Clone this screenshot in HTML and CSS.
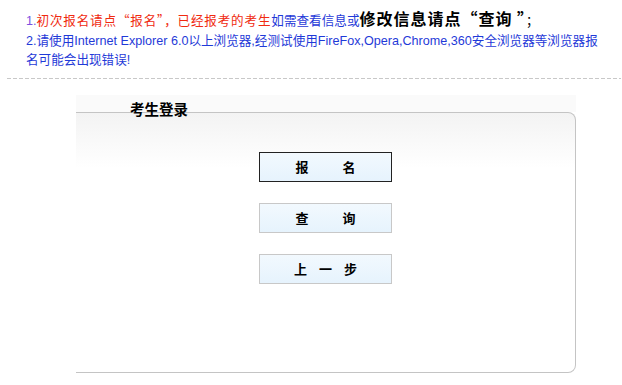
FILE: index.html
```html
<!DOCTYPE html>
<html lang="zh-CN">
<head>
  <meta charset="UTF-8">
  <title>考生登录</title>
  <link rel="stylesheet" href="styles.css">
</head>
<body>
  <div class="notice">
    <p class="line">
      <span class="num">1.</span><span class="red cjk">初次报名请点“报名”，已经报考的考生</span><span class="blue">如需查看信息或</span><strong class="big cjk">修改信息请点“查询 ”</strong><span class="semi">；</span>
    </p>
    <p class="line blue">
      2.请使用Internet Explorer 6.0以上浏览器,经测试使用FireFox,Opera,Chrome,360安全浏览器等浏览器报名可能会出现错误!
    </p>
  </div>

  <div class="dash"></div>

  <div class="panel">
    <div class="panel-head">
      <span class="panel-title">考生登录</span>
    </div>
    <div class="panel-box">
      <button class="btn btn-default btn-wide"><span>报</span><span>名</span></button>
      <button class="btn btn-wide"><span>查</span><span>询</span></button>
      <button class="btn btn-step"><span>上</span><span>一</span><span>步</span></button>
    </div>
  </div>
</body>
</html>
```

FILE: styles.css
```css
:root {
  --red: #f02a10;
  --blue: #1f3ad8;
  --line-gray: #c4c4c4;
}

body {
  margin: 0;
  font-family: 'Liberation Sans', 'Noto Sans CJK SC', sans-serif;
  font-size: 12.6px;
  color: #000;
  background: #fff;
}

.notice {
  padding: 9px 14px 0 26px;
}

.line {
  margin: 0;
  line-height: 19.5px;
}

.cjk {
  font-family: 'Noto Sans CJK SC', sans-serif;
}

.num {
  color: #7a50e0;
}

.red {
  color: var(--red);
  letter-spacing: 0.8px;
}

.blue {
  color: var(--blue);
}

.big {
  font-size: 16px;
  line-height: 19px;
  font-weight: bold;
  letter-spacing: 1px;
}

.semi {
  color: #000;
}

.dash {
  height: 1px;
  margin: 7px 1px 0 7px;
  background: repeating-linear-gradient(to right, #c8c8c8 0 4px, transparent 4px 6px);
}

/* login panel */
.panel {
  width: 500px;
  margin: 16px 0 0 76px;
}

.panel-head {
  height: 17px;
  background: #fafafa;
}

.panel-title {
  display: block;
  position: relative;
  padding: 7px 0 0 54px;
  line-height: 17px;
  height: 0;
  font-size: 14.5px;
  font-weight: bold;
}

.panel-box {
  border: 1px solid var(--line-gray);
  border-left: none;
  border-radius: 0 8px 8px 0;
  background: linear-gradient(#f3f3f3, #fff 55px);
  display: flex;
  flex-direction: column;
  align-items: center;
  gap: 21px;
  padding-top: 39px;
  box-sizing: border-box;
  height: 261px;
}

.btn {
  width: 133px;
  height: 30px;
  border: 1px solid #c8c8c8;
  background: linear-gradient(#f2f9fe, #e6f3fd);
  font-family: 'Noto Sans CJK SC', sans-serif;
  font-size: 13px;
  font-weight: bold;
  color: #000;
  display: flex;
  justify-content: center;
  align-items: center;
  padding: 0;
}

.btn-default {
  border-color: #222;
}

.btn-wide {
  gap: 34px;
}

.btn-step {
  gap: 12px;
}
```
